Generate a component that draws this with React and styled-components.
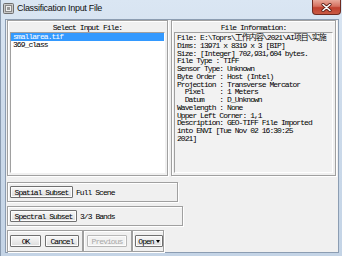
import React from "react";
import styled, { createGlobalStyle } from "styled-components";

const GlobalStyle = createGlobalStyle`
  html, body {
    margin: 0;
    padding: 0;
    background: #ffffff;
  }
`;

const mono = `"Liberation Mono", "Noto Sans CJK SC", monospace`;

const Window = styled.div`
  width: 342px;
  height: 256px;
  display: flex;
  flex-direction: column;
  box-sizing: border-box;
  background: linear-gradient(180deg, #dae6f3 0%, #cddbeb 40%, #c4d4e6 100%);
  border-left: 1px solid #8a9bb0;
  overflow: hidden;
`;

const TitleBar = styled.div`
  height: 19px;
  flex: none;
  display: flex;
  align-items: flex-start;
`;

const TitleIcon = styled.svg`
  width: 11px;
  height: 11px;
  margin: 3px 3px 0 2px;
  flex: none;
`;

const Title = styled.div`
  font-family: "Liberation Sans", Arial, sans-serif;
  font-size: 9px;
  letter-spacing: -0.3px;
  line-height: 17px;
  color: #111;
`;

const CloseButton = styled.div`
  margin-left: auto;
  margin-right: 1px;
  width: 29px;
  height: 15px;
  box-sizing: border-box;
  border: 1px solid #6e2a20;
  border-top: none;
  border-radius: 0 0 4px 4px;
  background: linear-gradient(180deg, #e9a99a 0%, #d5705f 45%, #c0402e 55%, #c85a44 100%);
  display: flex;
  align-items: center;
  justify-content: center;
`;

const Client = styled.div`
  flex: 1;
  margin: 0 3px 3px 4px;
  background: #f0f0f0;
  border: 1px solid #8c9db2;
  padding: 0 1px 0 1px;
  display: flex;
  flex-direction: column;
`;

const TopRow = styled.div`
  height: 156px;
  display: flex;
  gap: 3px;
  flex: none;
`;

const Etched = styled.div`
  box-sizing: border-box;
  border: 1px solid #a0a0a0;
  box-shadow: inset 1px 1px 0 #ffffff, 1px 1px 0 #ffffff;
`;

const Panel = styled(Etched)`
  width: ${(p) => p.$w}px;
  display: flex;
  flex-direction: column;
  padding: 1px 2px 2px 2px;
`;

const monoText = `
  font-family: ${mono};
  font-size: 8px;
  letter-spacing: -0.95px;
`;

const PanelLabel = styled.div`
  height: 10px;
  line-height: 11px;
  text-align: center;
  ${monoText}
  color: #000;
`;

const Sunken = styled.div`
  flex: 1;
  box-sizing: border-box;
  border-top: 1px solid #a0a0a0;
  border-left: 1px solid #a0a0a0;
  border-bottom: 1px solid #ffffff;
  border-right: 1px solid #ffffff;
  overflow: hidden;
`;

const ListBox = styled(Sunken)`
  background: #ffffff;
`;

const ListItem = styled.div`
  height: 8px;
  line-height: 8px;
  padding-left: 2px;
  ${monoText}
  color: ${(p) => (p.$selected ? "#ffffff" : "#000000")};
  background: ${(p) => (p.$selected ? "#3399ff" : "transparent")};
`;

const InfoBox = styled(Sunken)`
  background: #f2f2f2;
  padding: 1px 0 0 2px;
`;

const InfoText = styled.pre`
  margin: 0;
  ${monoText}
  line-height: 7.75px;
  color: #000;
  white-space: pre;
`;

const SubsetRow = styled(Etched)`
  width: ${(p) => p.$w}px;
  height: 20px;
  margin-top: ${(p) => p.$top}px;
  display: flex;
  align-items: center;
  padding-left: 2px;
  gap: 3px;
  flex: none;
`;

const Button = styled.div`
  width: ${(p) => p.$w}px;
  height: 12px;
  box-sizing: border-box;
  border: 1px solid ${(p) => (p.$disabled ? "#b8b8b8" : "#707070")};
  border-radius: 1px;
  background: ${(p) => (p.$disabled ? "#f2f2f2" : "linear-gradient(180deg, #f7f7f7 0%, #ebebeb 50%, #dcdcdc 100%)")};
  box-shadow: inset 0 0 0 1px #fcfcfc;
  display: flex;
  align-items: center;
  justify-content: center;
  gap: 2px;
  ${monoText}
  color: ${(p) => (p.$disabled ? "#a8a8a8" : "#000")};
  flex: none;
`;

const Caption = styled.span`
  ${monoText}
  color: #000;
`;

const BottomRow = styled.div`
  height: 22px;
  margin-top: 4px;
  display: flex;
  flex: none;
`;

const Group = styled(Etched)`
  width: ${(p) => p.$w}px;
  height: 22px;
  display: flex;
  align-items: center;
  padding-left: ${(p) => p.$pl}px;
  gap: 4px;
`;

const Caret = styled.span`
  width: 0;
  height: 0;
  border-left: 2.5px solid transparent;
  border-right: 2.5px solid transparent;
  border-top: 3px solid #000;
  margin-top: 1px;
`;

const info = [
  "File: E:\\Toprs\\工作内容\\2021\\AI项目\\实施",
  "Dims: 13971 x 8319 x 3 [BIP]",
  "Size: [Integer] 702,931,604 bytes.",
  "File Type : TIFF",
  "Sensor Type: Unknown",
  "Byte Order : Host (Intel)",
  "Projection : Transverse Mercator",
  "  Pixel    : 1 Meters",
  "  Datum    : D_Unknown",
  "Wavelength : None",
  "Upper Left Corner: 1,1",
  "Description: GEO-TIFF File Imported",
  "into ENVI [Tue Nov 02 16:30:25",
  "2021]",
].join("\n");

export default function App() {
  return (
    <>
      <GlobalStyle />
      <Window>
        <TitleBar>
          <TitleIcon viewBox="0 0 11 11">
            <rect x="0.5" y="0.5" width="10" height="10" rx="1" fill="#c8c8c8" stroke="#6f6f6f" />
            <rect x="2.5" y="2.5" width="6" height="6" fill="#eeeeee" stroke="#8a8a8a" />
            <rect x="4" y="4" width="3" height="3" fill="#9a9a9a" />
          </TitleIcon>
          <Title>Classification Input File</Title>
          <CloseButton>
            <svg width="11" height="9" viewBox="0 0 11 9">
              <path d="M2 1.5 L9 7.5 M9 1.5 L2 7.5" stroke="#5a1e16" strokeWidth="3.2" strokeLinecap="round" />
              <path d="M2 1.5 L9 7.5 M9 1.5 L2 7.5" stroke="#ffffff" strokeWidth="1.6" strokeLinecap="round" />
            </svg>
          </CloseButton>
        </TitleBar>
        <Client>
          <TopRow>
            <Panel $w={161}>
              <PanelLabel>Select Input File:</PanelLabel>
              <ListBox>
                <ListItem $selected>smallarea.tif</ListItem>
                <ListItem>369_class</ListItem>
              </ListBox>
            </Panel>
            <Panel $w={165}>
              <PanelLabel>File Information:</PanelLabel>
              <InfoBox>
                <InfoText>{info}</InfoText>
              </InfoBox>
            </Panel>
          </TopRow>
          <SubsetRow $w={171} $top={6}>
            <Button $w={63}>Spatial Subset</Button>
            <Caption>Full Scene</Caption>
          </SubsetRow>
          <SubsetRow $w={176} $top={4}>
            <Button $w={67}>Spectral Subset</Button>
            <Caption>3/3 Bands</Caption>
          </SubsetRow>
          <BottomRow>
            <Group $w={76} $pl={2}>
              <Button $w={31}>OK</Button>
              <Button $w={34}>Cancel</Button>
            </Group>
            <Group $w={49} $pl={3}>
              <Button $w={40} $disabled>Previous</Button>
            </Group>
            <Group $w={32} $pl={2}>
              <Button $w={28}>
                Open
                <Caret />
              </Button>
            </Group>
          </BottomRow>
        </Client>
      </Window>
    </>
  );
}
